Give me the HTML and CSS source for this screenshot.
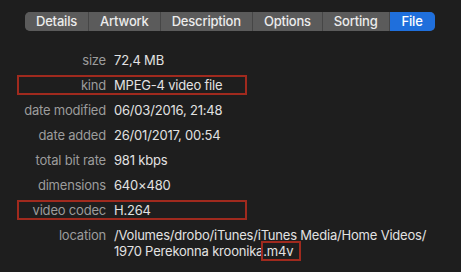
FILE: index.html
```html
<!DOCTYPE html>
<html lang="en">
<head>
  <meta charset="UTF-8" />
  <title>File info</title>
  <link rel="stylesheet" href="styles.css">
</head>
<body>
  <div class="panel">

    <!-- Tabs -->
    <nav class="tabs">
      <span class="tab">Details</span>
      <span class="tab">Artwork</span>
      <span class="tab">Description</span>
      <span class="tab">Options</span>
      <span class="tab">Sorting</span>
      <span class="tab active">File</span>
    </nav>

    <!-- File properties -->
    <dl class="props">
      <div class="row"><dt>size</dt><dd>72,4 MB</dd></div>
      <div class="row mark"><dt>kind</dt><dd>MPEG-4 video file</dd></div>
      <div class="row"><dt>date modified</dt><dd>06/03/2016, 21:48</dd></div>
      <div class="row"><dt>date added</dt><dd>26/01/2017, 00:54</dd></div>
      <div class="row"><dt>total bit rate</dt><dd>981 kbps</dd></div>
      <div class="row"><dt>dimensions</dt><dd>640×480</dd></div>
      <div class="row mark"><dt>video codec</dt><dd>H.264</dd></div>
      <div class="row"><dt>location</dt><dd>/Volumes/drobo/iTunes/iTunes Media/Home Videos/<br>1970 Perekonna kroonika<span class="ext">.m4v</span></dd></div>
    </dl>

  </div>
</body>
</html>
```

FILE: styles.css
```css
body {
  margin: 0;
  background-color: #1e1e1e;
  font-family: Inter, 'Noto Sans', sans-serif;
  font-size: 13px;
  letter-spacing: -0.2px;
}

.panel {
  width: 461px;
  height: 272px;
  padding-top: 12px;
  box-sizing: border-box;
}

.tabs {
  display: flex;
  margin-left: 25px;
  width: fit-content;
  border-radius: 5px;
  overflow: hidden;
  background: #464646;
  gap: 1px;
}

.tab {
  height: 19px;
  line-height: 19px;
  padding: 0 11px;
  background: #5b5b5b;
  color: #ececec;
  font-weight: 500;
}

.tab.active {
  padding: 0 12px;
  background: #1f6fdc;
  color: #fff;
}

.props {
  margin: 19px 0 0 17px;
  display: flex;
  flex-direction: column;
  align-items: flex-start;
  gap: 5px;
}

.row {
  display: grid;
  grid-template-columns: 87px auto;
  column-gap: 8px;
  border: 2px solid transparent;
  line-height: 16px;
}

.row.mark {
  width: 226px;
  border-color: #a02a1e;
}

dt {
  text-align: right;
  color: #9c9c9c;
}

dd {
  margin: 0;
  color: #e2e2e2;
}

.ext {
  border: 2px solid #a02a1e;
  margin-left: -2px;
  padding-right: 6px;
}
```
